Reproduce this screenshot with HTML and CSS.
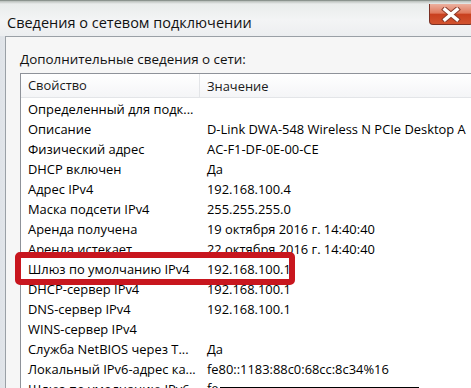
FILE: index.html
```html
<!DOCTYPE html>
<html lang="ru">
<head>
    <meta charset="UTF-8">
    <title>Сведения о сетевом подключении</title>
    <link rel="stylesheet" href="styles.css">
</head>
<body>
    <div class="window">
        <div class="titlebar">
            <span class="title">Сведения о сетевом подключении</span>
            <div class="close">
                <svg width="20" height="15" viewBox="0 0 20 15">
                    <path d="M4 2.5 L16 12.5 M16 2.5 L4 12.5" stroke="#8a3a2a" stroke-width="5.5" stroke-linecap="square"/>
                    <path d="M4 2.5 L16 12.5 M16 2.5 L4 12.5" stroke="#fff" stroke-width="3.5" stroke-linecap="square"/>
                </svg>
            </div>
        </div>
        <div class="client">
            <div class="label">Дополнительные сведения о сети:</div>
            <div class="listview">
                <div class="row head">
                    <div class="cell">Свойство</div>
                    <div class="cell">Значение</div>
                </div>
                <div class="row"><div class="cell">Определенный для подк...</div><div class="cell"></div></div>
                <div class="row"><div class="cell">Описание</div><div class="cell">D-Link DWA-548 Wireless N PCIe Desktop A</div></div>
                <div class="row"><div class="cell">Физический адрес</div><div class="cell">AC-F1-DF-0E-00-CE</div></div>
                <div class="row"><div class="cell">DHCP включен</div><div class="cell">Да</div></div>
                <div class="row"><div class="cell">Адрес IPv4</div><div class="cell">192.168.100.4</div></div>
                <div class="row"><div class="cell">Маска подсети IPv4</div><div class="cell">255.255.255.0</div></div>
                <div class="row"><div class="cell">Аренда получена</div><div class="cell">19 октября 2016 г. 14:40:40</div></div>
                <div class="row"><div class="cell">Аренда истекает</div><div class="cell">22 октября 2016 г. 14:40:40</div></div>
                <div class="row marked"><div class="cell">Шлюз по умолчанию IPv4</div><div class="cell">192.168.100.1</div></div>
                <div class="row"><div class="cell">DHCP-сервер IPv4</div><div class="cell">192.168.100.1</div></div>
                <div class="row"><div class="cell">DNS-сервер IPv4</div><div class="cell">192.168.100.1</div></div>
                <div class="row"><div class="cell">WINS-сервер IPv4</div><div class="cell"></div></div>
                <div class="row"><div class="cell">Служба NetBIOS через T...</div><div class="cell">Да</div></div>
                <div class="row"><div class="cell">Локальный IPv6-адрес ка...</div><div class="cell">fe80::1183:88c0:68cc:8c34%16</div></div>
                <div class="row"><div class="cell">Шлюз по умолчанию IPv6</div><div class="cell">fe<span class="redact"></span></div></div>
            </div>
        </div>
    </div>
</body>
</html>
```

FILE: styles.css
```css
body {
    margin: 0;
    font-family: "Open Sans", "Noto Sans", sans-serif;
    background: #e9ecef;
}
.window {
    width: 471px;
    height: 388px;
    overflow: hidden;
    background: linear-gradient(to right, #dfe3e8, #eef0f2 40px);
}
.titlebar {
    height: 36px;
    display: flex;
    align-items: center;
    padding-left: 7px;
    background: linear-gradient(#5f6a63 0, #b7bdb9 1px, #e9eceb 4px, #f3f4f5 20px, #eceef0 36px);
}
.title {
    font-size: 14.5px;
    color: #111;
    margin-top: 8px;
}
.close {
    margin-left: auto;
    align-self: flex-start;
    margin-top: 4px;
    width: 44px;
    height: 21px;
    margin-right: -2px;
    border: 1px solid #7a3024;
    border-top: none;
    border-radius: 0 0 4px 4px;
    background: linear-gradient(#ecb09f 0%, #e07a5e 45%, #c9401f 52%, #d2532f 100%);
    display: flex;
    align-items: center;
    justify-content: center;
    box-sizing: border-box;
}
.client {
    margin-left: 5px;
    border-top: 1px solid #9aa0a6;
    border-left: 1px solid #9aa0a6;
    background: #f6f6f6;
    padding: 13px 0 0 14px;
    height: 400px;
}
.label {
    font-size: 13.4px;
    line-height: 18px;
    color: #111;
    margin-bottom: 5px;
}
.listview {
    border: 1px solid #8e9299;
    border-right: none;
    background: #fff;
}
.row {
    display: grid;
    grid-template-columns: 179px 1fr;
    height: 20px;
    align-items: center;
    font-size: 12.9px;
    color: #000;
    white-space: nowrap;
}
.cell {
    padding-left: 7px;
    overflow: hidden;
}
.head {
    height: 23px;
    background: linear-gradient(#ffffff, #f4f5f7);
    border-bottom: 1px solid #e3e5e8;
    color: #1a1a1a;
    margin-bottom: 1px;
}
.head .cell:first-child {
    border-right: 1px solid #e3e5e8;
    height: 23px;
    line-height: 23px;
}
.marked {
    position: relative;
}
.marked::after {
    content: "";
    position: absolute;
    left: -6px;
    top: -7px;
    width: 268px;
    height: 21px;
    border: 6px solid #c8161e;
    border-radius: 5px;
}
.redact {
    display: inline-block;
    width: 199px;
    height: 12px;
    background: #000;
    vertical-align: -6px;
    margin-left: 1px;
}
```
